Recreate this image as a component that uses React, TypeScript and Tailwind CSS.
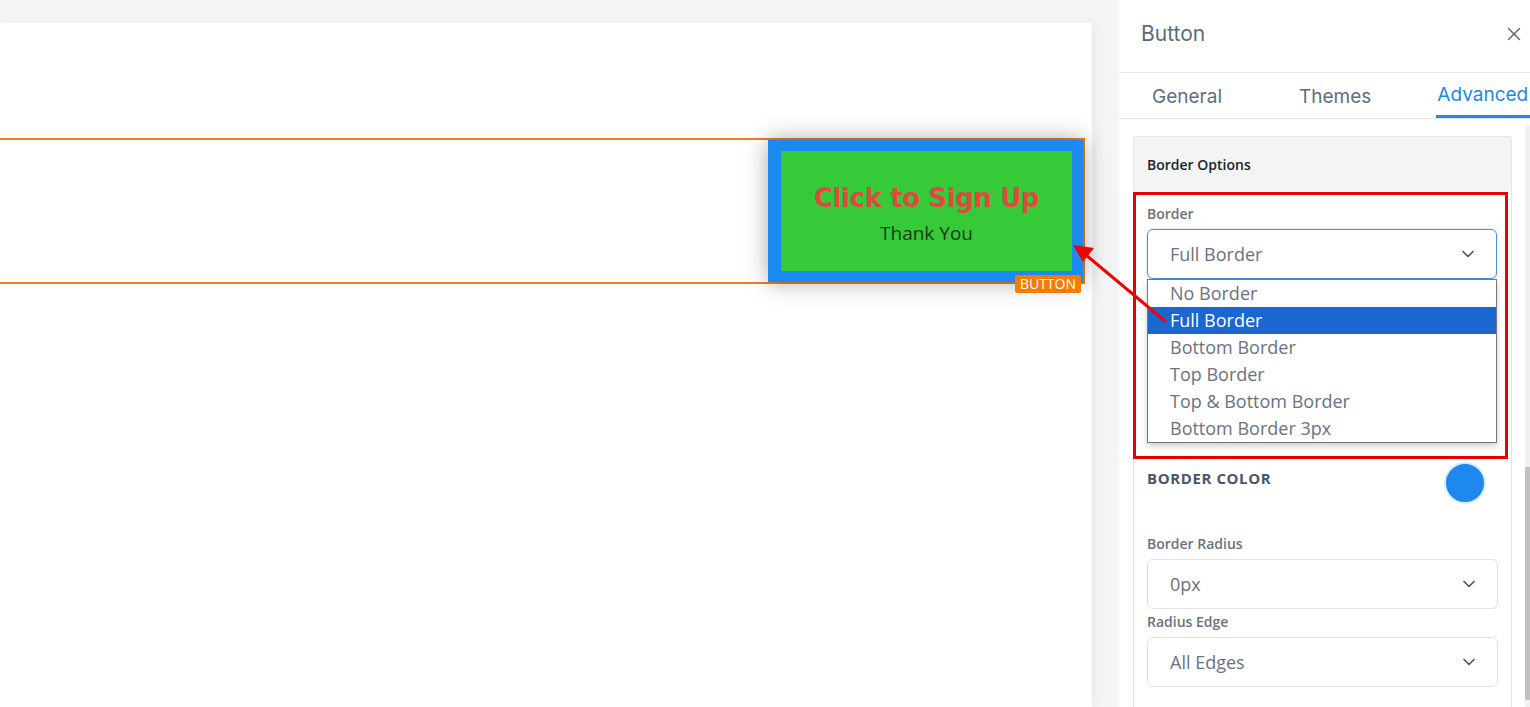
import { X, ChevronDown } from 'lucide-react'

const BORDER_OPTIONS = [
  'No Border',
  'Full Border',
  'Bottom Border',
  'Top Border',
  'Top & Bottom Border',
  'Bottom Border 3px',
]

export default function App() {
  return (
    <div className="relative flex h-[707px] w-[1530px] overflow-hidden bg-[#f3f4f6] font-['Open_Sans',sans-serif]">
      {/* 캔버스 */}
      <div className="flex w-[1119px] shrink-0 flex-col pt-[23px]">
        <div className="relative w-[1092px] flex-1 bg-white shadow-[4px_0_10px_rgba(0,0,0,0.04)]">
          <div className="h-[115px]" />
          <div className="relative flex h-[146px] w-[1085px] justify-end border-y-2 border-r-2 border-[#e8801f]">
            <div className="flex w-[315px] bg-[#1b8af0] py-[11px] pl-[13px] pr-[11px] shadow-[0_0_22px_rgba(0,0,0,0.35)]">
              <div className="flex flex-1 flex-col items-center justify-center bg-[#36c938] pt-[6px]">
                <span className="font-['DejaVu_Sans',sans-serif] text-[26px] font-bold leading-none tracking-[-0.4px] text-[#df4a3f]">
                  Click to Sign Up
                </span>
                <span className="mt-[13px] text-[19px] leading-none text-[#1c3a1a]">Thank You</span>
              </div>
            </div>
            <span className="absolute right-[2px] top-[135px] rounded-[2px] bg-[#f57c00] px-[5px] text-[14px] leading-[18px] text-white">
              BUTTON
            </span>
          </div>
        </div>
      </div>

      {/* 설정 패널 */}
      <div className="flex w-[411px] shrink-0 flex-col bg-white">
        <div className="flex h-[73px] items-center justify-between border-b border-[#e2e5e9] pl-[22px] pr-[5px] pb-[4px]">
          <span className="font-['Inter',sans-serif] text-[21px] text-[#5c6b7a]">Button</span>
          <X className="h-[22px] w-[22px] text-[#5c6b7a]" strokeWidth={1.6} />
        </div>
        <div className="flex h-[46px] items-stretch border-b border-[#e2e5e9] pl-[33px] font-['Inter',sans-serif] text-[19px]">
          <span className="flex items-center pt-[3px] text-[#616e7c]">General</span>
          <span className="ml-[77px] flex items-center pt-[3px] text-[#616e7c]">Themes</span>
          <span className="ml-[65px] flex items-center border-b-[3px] border-[#1e88e5] pl-[1px] pr-[4px] pt-[3px] text-[#1e88e5]">
            Advanced
          </span>
        </div>

        <div className="flex flex-1">
          <div className="flex-1 pl-[14px] pr-[13px] pt-[17px]">
            <div className="h-full rounded-t-[3px] border border-b-0 border-[#e3e6ea]">
              <div className="flex h-[54px] items-center bg-[#f3f4f6] pl-[13px] text-[14px] font-semibold text-[#1f2328]">
                Border Options
              </div>

              <div className="-ml-px mt-px w-[375px] border-[3px] border-[#e60000] pb-[13px] pl-[11px] pr-[8px] pt-[8px]">
                <p className="text-[14px] font-semibold text-[#6b7280]">Border</p>
                <div className="mt-[5px] flex h-[50px] items-center justify-between rounded-[6px] border border-[#4a8fe0] pl-[22px] pr-[18px] text-[18px] text-[#6b7280] shadow-[0_0_0_1px_rgba(30,136,229,0.15)]">
                  Full Border
                  <ChevronDown className="h-[20px] w-[20px] text-[#4b5563]" strokeWidth={2} />
                </div>
                <ul className="border border-[#767676] bg-white shadow-[0_3px_6px_rgba(0,0,0,0.2)]">
                  {BORDER_OPTIONS.map((opt) => (
                    <li
                      key={opt}
                      className={`h-[27px] pl-[22px] text-[18px] leading-[27px] ${
                        opt === 'Full Border' ? 'bg-[#1a67d2] text-white' : 'text-[#6b7280]'
                      }`}
                    >
                      {opt}
                    </li>
                  ))}
                </ul>
              </div>

              <div className="flex items-start justify-between pl-[13px] pr-[25px] pt-[3px]">
                <span className="mt-[5px] text-[15px] font-bold tracking-[0.6px] text-[#4a5568]">BORDER COLOR</span>
                <span className="h-[42px] w-[42px] rounded-full border-2 border-[#dbeafe] bg-[#1e88f0]" />
              </div>

              <div className="pl-[13px] pr-[13px] pt-[29px]">
                <SelectField label="Border Radius" value="0px" />
                <div className="h-[2px]" />
                <SelectField label="Radius Edge" value="All Edges" />
              </div>
            </div>
          </div>
          {/* 스크롤바 */}
          <div className="mt-[6px] flex w-[5px] flex-col bg-[#f1f1f1]">
            <div className="h-[342px]" />
            <div className="h-[233px] bg-[#c1c1c1]" />
          </div>
        </div>
      </div>

      {/* 화살표 */}
      <svg className="pointer-events-none absolute left-0 top-0" width="1530" height="707">
        <line x1="1165" y1="321" x2="1086" y2="255" stroke="#f00000" strokeWidth="3" strokeLinecap="round" />
        <polygon points="1073,245 1094,248 1083,262" fill="#f00000" />
      </svg>
    </div>
  )
}

function SelectField({ label, value }: { label: string; value: string }) {
  return (
    <div>
      <p className="text-[14px] font-semibold text-[#6b7280]">{label}</p>
      <div className="mt-[5px] flex h-[50px] items-center justify-between rounded-[6px] border border-[#dfe2e6] pl-[22px] pr-[18px] text-[18px] text-[#6b7280]">
        {value}
        <ChevronDown className="h-[20px] w-[20px] text-[#4b5563]" strokeWidth={2} />
      </div>
    </div>
  )
}
